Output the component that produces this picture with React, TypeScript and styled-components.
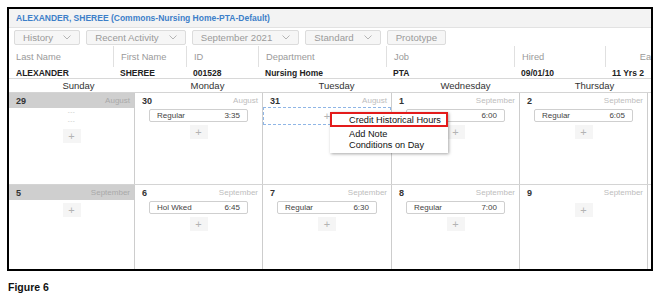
import styled, { createGlobalStyle } from "styled-components";

const GlobalStyle = createGlobalStyle`
  html, body {
    margin: 0;
    padding: 0;
    background: #fff;
    font-family: "Liberation Sans", Arial, sans-serif;
  }
`;

const Page = styled.div`
  padding: 7px 0 0 7px;
  width: 660px;
`;

const Frame = styled.div`
  position: relative;
  width: 642px;
  height: 260px;
  border: 2px solid #000;
  overflow: hidden;
  background: #fff;
`;

const TitleBar = styled.div`
  height: 18px;
  display: flex;
  align-items: center;
  padding-left: 7px;
  background: #f3f3f3;
  border-bottom: 1px solid #e2e2e2;
  color: #3d7fc9;
  font-size: 8.5px;
  font-weight: bold;
  white-space: nowrap;
`;

const Toolbar = styled.div`
  height: 18px;
  display: flex;
  align-items: center;
  gap: 6px;
  padding-left: 5px;
`;

const ToolButton = styled.div`
  height: 13px;
  display: flex;
  align-items: center;
  gap: 10px;
  padding: 0 8px;
  border: 1px solid #dcdcdc;
  border-radius: 2px;
  background: #f6f6f6;
  color: #9a9a9a;
  font-size: 9.7px;
  white-space: nowrap;
`;

const Chevron = () => (
  <svg width="8" height="5" viewBox="0 0 8 5">
    <polyline points="0.5,0.5 4,4 7.5,0.5" fill="none" stroke="#b5b5b5" strokeWidth="1" />
  </svg>
);

const InfoGrid = styled.div`
  display: grid;
  grid-template-columns: 104px 73px 72px 128px 128px 91px 80px;
`;

const HeadCell = styled.div<{ $center?: boolean }>`
  height: 21px;
  display: flex;
  align-items: center;
  justify-content: ${({ $center }) => ($center ? "center" : "flex-start")};
  padding-left: ${({ $center }) => ($center ? "0" : "7px")};
  color: #9a9a9a;
  font-size: 9.3px;
  white-space: nowrap;
  & + & {
    border-left: 1px solid #e0e0e0;
  }
`;

const DataRow = styled(InfoGrid)`
  border-bottom: 1px solid #d8d8d8;
`;

const DataCell = styled.div`
  height: 11px;
  display: flex;
  align-items: center;
  padding-left: 7px;
  color: #222;
  font-size: 8.5px;
  font-weight: bold;
  white-space: nowrap;
`;

const DayHeader = styled.div`
  display: grid;
  grid-template-columns: repeat(5, 129px);
  padding-left: 5px;
  height: 13px;
  border-bottom: 1px solid #d4d4d4;
`;

const DayName = styled.div`
  text-align: center;
  line-height: 13px;
  color: #333;
  font-size: 9.5px;
`;

const Week = styled.div<{ $height: number }>`
  display: grid;
  grid-template-columns: 126px 128px 129px 128px 128px 128px;
  height: ${({ $height }) => $height}px;
  border-bottom: 1px solid #d4d4d4;
`;

const DayCell = styled.div`
  display: flex;
  flex-direction: column;
  border-right: 1px solid #cdcdcd;
`;

const DateBar = styled.div<{ $weekend?: boolean }>`
  height: 15px;
  flex-shrink: 0;
  display: flex;
  align-items: center;
  justify-content: space-between;
  padding: 0 4px 0 7px;
  background: ${({ $weekend }) => ($weekend ? "#cfcfcf" : "#fff")};
`;

const DateNum = styled.span`
  color: #333;
  font-size: 9px;
  font-weight: bold;
`;

const Month = styled.span<{ $weekend?: boolean }>`
  color: ${({ $weekend }) => ($weekend ? "#a9a9a9" : "#bdbdbd")};
  font-size: 8px;
`;

const ShiftCard = styled.div`
  height: 11px;
  margin: 1px 14px 0 14px;
  display: flex;
  align-items: center;
  justify-content: space-between;
  padding: 0 7px;
  border: 1px solid #cfcfcf;
  border-radius: 2px;
  background: #fff;
  color: #444;
  font-size: 8px;
`;

const AddButton = styled.div`
  align-self: center;
  width: 18px;
  height: 14px;
  margin-top: 3px;
  display: flex;
  align-items: center;
  justify-content: center;
  background: #f5f5f5;
  color: #b3b3b3;
  font-size: 11px;
  line-height: 1;
`;

const Blank = styled.div`
  align-self: center;
  height: 9px;
  line-height: 9px;
  color: #b8b8b8;
  font-size: 6px;
  letter-spacing: 0.5px;
`;

const DropSlot = styled.div`
  height: 16px;
  margin-top: -1px;
  display: flex;
  align-items: center;
  justify-content: center;
  border: 1px dashed #8fb6e6;
  color: #b3b3b3;
  font-size: 11px;
`;

const Menu = styled.div`
  position: absolute;
  left: 321px;
  top: 103px;
  width: 118px;
  padding-bottom: 3px;
  background: #fff;
  box-shadow: 1px 1px 3px rgba(0, 0, 0, 0.35);
`;

const MenuItem = styled.div<{ $active?: boolean }>`
  height: 11px;
  display: flex;
  align-items: center;
  padding-left: ${({ $active }) => ($active ? "17px" : "19px")};
  border: ${({ $active }) => ($active ? "2px solid #e31b1b" : "0")};
  margin-bottom: ${({ $active }) => ($active ? "1px" : "0")};
  color: #111;
  font-size: 9.2px;
  white-space: nowrap;
`;

const Caption = styled.div`
  margin-top: 10px;
  padding-left: 1px;
  font-family: "Liberation Sans Narrow", "Liberation Sans", sans-serif;
  font-weight: bold;
  font-size: 10.5px;
  color: #111;
`;

type Day = {
  date: string;
  month: string;
  weekend?: boolean;
  shift?: [string, string];
  blanks?: boolean;
  slot?: boolean;
  noAdd?: boolean;
};

const week1: Day[] = [
  { date: "29", month: "August", weekend: true, blanks: true },
  { date: "30", month: "August", shift: ["Regular", "3:35"] },
  { date: "31", month: "August", slot: true, noAdd: true },
  { date: "1", month: "September", shift: ["Regular", "6:00"] },
  { date: "2", month: "September", shift: ["Regular", "6:05"] },
];

const week2: Day[] = [
  { date: "5", month: "September", weekend: true },
  { date: "6", month: "September", shift: ["Hol Wked", "6:45"] },
  { date: "7", month: "September", shift: ["Regular", "6:30"] },
  { date: "8", month: "September", shift: ["Regular", "7:00"] },
  { date: "9", month: "September" },
];

function DayBox({ day }: { day: Day }) {
  return (
    <DayCell>
      <DateBar $weekend={day.weekend}>
        <DateNum>{day.date}</DateNum>
        <Month $weekend={day.weekend}>{day.month}</Month>
      </DateBar>
      {day.blanks ? (
        <>
          <Blank>---</Blank>
          <Blank>---</Blank>
        </>
      ) : null}
      {day.shift ? (
        <ShiftCard>
          <span>{day.shift[0]}</span>
          <span>{day.shift[1]}</span>
        </ShiftCard>
      ) : null}
      {day.slot ? <DropSlot>+</DropSlot> : null}
      {day.noAdd ? null : <AddButton>+</AddButton>}
    </DayCell>
  );
}

const heads = ["Last Name", "First Name", "ID", "Department", "Job", "Hired"];
const values = ["ALEXANDER", "SHEREE", "001528", "Nursing Home", "PTA", "09/01/10", "11 Yrs 2"];

export default function App() {
  return (
    <Page>
      <GlobalStyle />
      <Frame>
        <TitleBar>ALEXANDER, SHEREE (Commons-Nursing Home-PTA-Default)</TitleBar>
        <Toolbar>
          <ToolButton>
            History <Chevron />
          </ToolButton>
          <ToolButton>
            Recent Activity <Chevron />
          </ToolButton>
          <ToolButton>
            September 2021 <Chevron />
          </ToolButton>
          <ToolButton>
            Standard <Chevron />
          </ToolButton>
          <ToolButton>Prototype</ToolButton>
        </Toolbar>
        <InfoGrid>
          {heads.map((h) => (
            <HeadCell key={h}>{h}</HeadCell>
          ))}
          <HeadCell $center>Ea</HeadCell>
        </InfoGrid>
        <DataRow>
          {values.map((v) => (
            <DataCell key={v}>{v}</DataCell>
          ))}
        </DataRow>
        <DayHeader>
          {["Sunday", "Monday", "Tuesday", "Wednesday", "Thursday"].map((d) => (
            <DayName key={d}>{d}</DayName>
          ))}
        </DayHeader>
        <Week $height={91}>
          {week1.map((d) => (
            <DayBox key={d.date} day={d} />
          ))}
          <DayCell />
        </Week>
        <Week $height={100}>
          {week2.map((d) => (
            <DayBox key={d.date} day={d} />
          ))}
          <DayCell />
        </Week>
        <Menu>
          <MenuItem $active>Credit Historical Hours</MenuItem>
          <MenuItem>Add Note</MenuItem>
          <MenuItem>Conditions on Day</MenuItem>
        </Menu>
      </Frame>
      <Caption>Figure 6</Caption>
    </Page>
  );
}
